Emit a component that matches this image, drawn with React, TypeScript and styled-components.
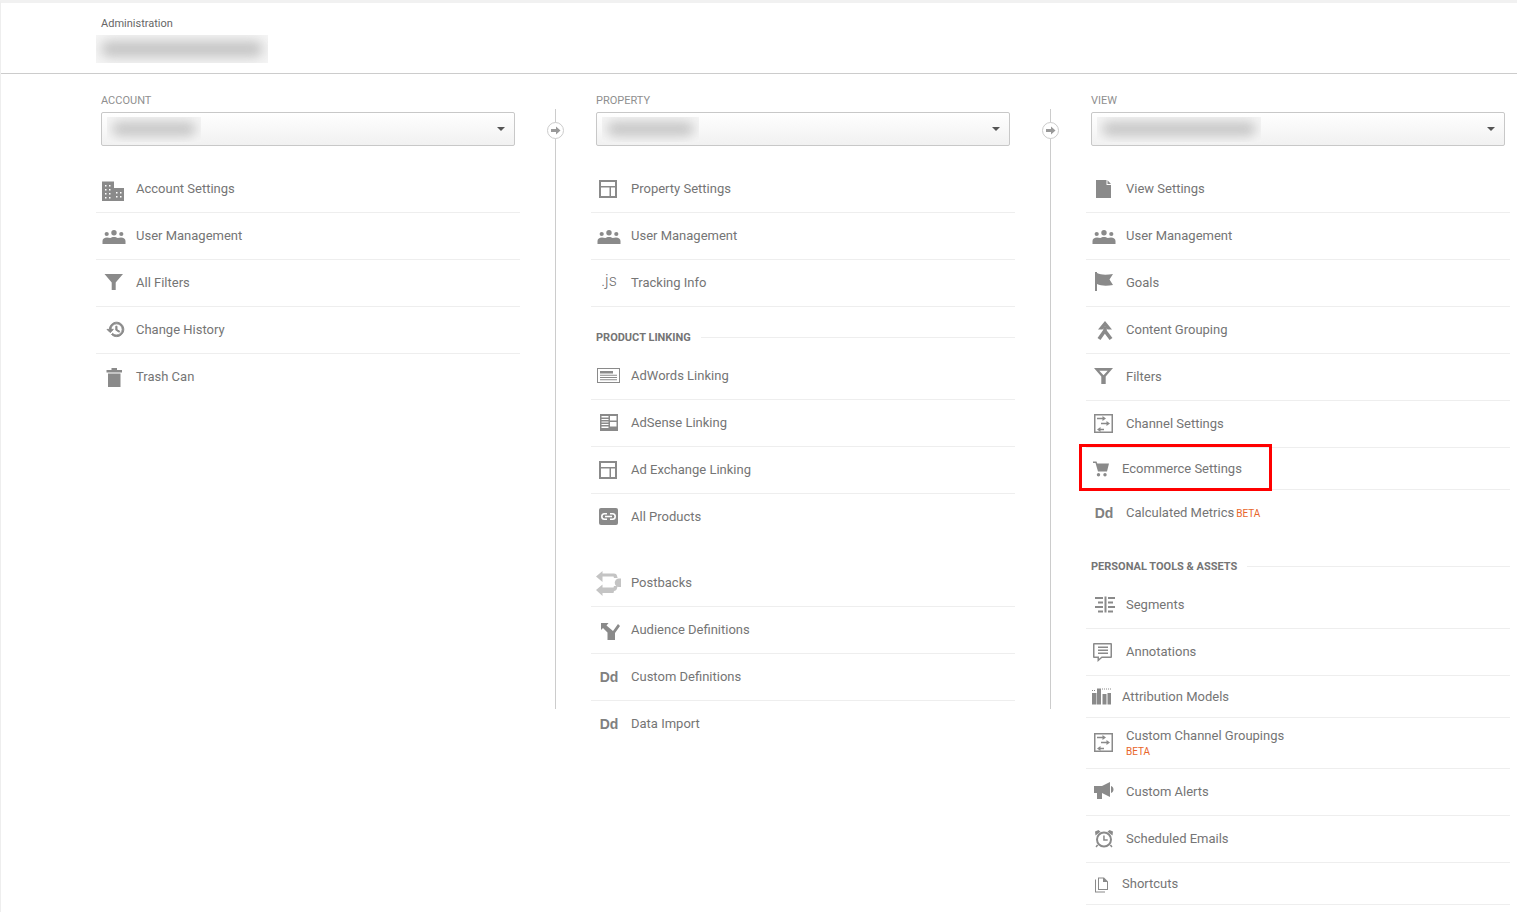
import React from "react";
import styled, { createGlobalStyle } from "styled-components";

const GlobalStyle = createGlobalStyle`
  html, body {
    margin: 0;
    padding: 0;
    background: #fff;
  }
  body {
    font-family: Roboto, "Liberation Sans", sans-serif;
    color: #757575;
    overflow: hidden;
  }
`;

const SPage = styled.div`
  min-height: 909px;
  border-top: 3px solid #f1f1f1;
  border-left: 1px solid #eeeeee;
`;

const SHeader = styled.header`
  height: 71px;
  box-sizing: border-box;
  padding: 14px 0 0 100px;
  border-bottom: 1px solid #cccccc;
`;

const SCrumb = styled.div`
  font-size: 11px;
  line-height: 14px;
  color: #666666;
`;

const SBlurPatch = styled.div<{ $w: number; $h: number }>`
  width: ${(p) => p.$w}px;
  height: ${(p) => p.$h}px;
  background: #f5f5f5;
  overflow: hidden;
  display: flex;
  align-items: center;
  padding: 0 5px;
  box-sizing: border-box;
`;

const SBlurBar = styled.div`
  flex: 1;
  height: 58%;
  background: #c4c4c4;
  border-radius: 8px;
  filter: blur(6px);
`;

const SHeaderBlur = styled.div`
  margin: 4px 0 0 -5px;
`;

const SColumns = styled.main`
  display: flex;
  padding: 19px 0 0 95px;
`;

const SColumn = styled.section`
  width: 424px;
  flex: none;
`;

const SRail = styled.div`
  width: 71px;
  flex: none;
  padding: 16px 0 0 35px;
  box-sizing: border-box;
`;

const SRailLine = styled.div`
  position: relative;
  width: 1px;
  height: 600px;
  background: #cccccc;
`;

const SRailDot = styled.div`
  position: absolute;
  top: 13px;
  left: -8px;
  width: 17px;
  height: 17px;
  box-sizing: border-box;
  border: 1px solid #cccccc;
  border-radius: 50%;
  background: #fff;
  display: flex;
  align-items: center;
  justify-content: center;
`;

const SColumnLabel = styled.div`
  padding-left: 5px;
  font-size: 11px;
  line-height: 16px;
  color: #8f8f8f;
  text-transform: uppercase;
`;

const SSelect = styled.div`
  width: 414px;
  height: 34px;
  box-sizing: border-box;
  margin: 3px 0 20px 5px;
  padding: 0 9px 0 5px;
  border: 1px solid #c8c8c8;
  border-radius: 2px;
  background: linear-gradient(#ffffff, #f1f1f1);
  display: flex;
  align-items: center;
  justify-content: space-between;
`;

const SCaret = styled.span`
  width: 0;
  height: 0;
  border-left: 4px solid transparent;
  border-right: 4px solid transparent;
  border-top: 4px solid #555555;
`;

const SRow = styled.div<{ $compact?: boolean; $tall?: boolean; $last?: boolean; $spaced?: boolean }>`
  position: relative;
  box-sizing: border-box;
  height: ${(p) => (p.$last ? "46px" : p.$tall ? "51px" : p.$compact ? "42px" : "47px")};
  margin-bottom: ${(p) => (p.$spaced ? "20px" : "0")};
  padding-left: ${(p) => (p.$compact ? "3px" : "6px")};
  border-bottom: ${(p) => (p.$last ? "none" : "1px solid #eeeeee")};
  display: flex;
  align-items: center;
  gap: ${(p) => (p.$compact ? "9px" : "10px")};
  font-size: 13px;
  color: #757575;
`;

const SLabel = styled.span<{ $lift?: boolean }>`
  margin-bottom: ${(p) => (p.$lift ? "2px" : "0")};
`;

const SHighlight = styled.div`
  position: absolute;
  top: -4px;
  left: -7px;
  width: 193px;
  height: 47px;
  box-sizing: border-box;
  border: 3px solid #ff0000;
`;

const SLabelStack = styled.div`
  display: flex;
  flex-direction: column;
  gap: 2px;
  line-height: 15px;
`;

const SBeta = styled.span<{ $inline?: boolean }>`
  font-size: 10px;
  line-height: 14px;
  color: #e8662a;
  margin-left: ${(p) => (p.$inline ? "2px" : "0")};
`;

const SSection = styled.div`
  height: 46px;
  box-sizing: border-box;
  padding: 23px 0 0 5px;
  display: flex;
  align-items: flex-start;
  gap: 10px;
  font-size: 11px;
  line-height: 16px;
  font-weight: 700;
  color: #757575;
  &::after {
    content: "";
    flex: 1;
    height: 1px;
    margin-top: 7px;
    background: #eeeeee;
  }
`;

const SGlyph = styled.svg<{ $light?: boolean }>`
  width: 24px;
  height: 24px;
  flex: none;
  fill: ${(p) => (p.$light ? "#c4c4c4" : "#8a8a8a")};
  overflow: visible;
`;

const STextIcon = styled.span<{ $bold?: boolean }>`
  width: 24px;
  flex: none;
  text-align: center;
  color: ${(p) => (p.$bold ? "#808080" : "#707070")};
  font-family: ${(p) => (p.$bold ? '"Liberation Sans", sans-serif' : "Roboto, sans-serif")};
  font-size: ${(p) => (p.$bold ? "14px" : "16px")};
  font-weight: ${(p) => (p.$bold ? 700 : 300)};
  line-height: 20px;
  margin-bottom: ${(p) => (p.$bold ? "0" : "4px")};
`;

const Glyph = ({ children, light }: { children: React.ReactNode; light?: boolean }) => (
  <SGlyph viewBox="0 0 24 24" $light={light}>
    {children}
  </SGlyph>
);

const BuildingIcon = () => (
  <Glyph>
    <path
      fillRule="evenodd"
      d="M0 4.500h12v6.500h10v13H0zM3 8v1.500h1.500V8zm4 0v1.500h1.500V8zM3 12v1.500h1.500V12zm4 0v1.500h1.500V12zM3 16v1.500h1.500V16zm4 0v1.500h1.500V16zM3 20v1.500h1.500V20zm4 0v1.500h1.500V20zm7-5v1.500h1.500V15zm4 0v1.500h1.500V15zm-4 4v1.500h1.500V19zm4 0v1.500h1.500V19z"
    />
  </Glyph>
);

const PeopleIcon = () => (
  <Glyph>
    <circle cx="4.700" cy="10" r="2.100" />
    <circle cx="12" cy="8.800" r="2.700" />
    <circle cx="19.300" cy="10" r="2.100" />
    <path d="M.5 20v-3c0-2 2-3.500 4.500-3.500 1.200 0 2.300.2 3.200.6 1-.7 2.400-1.100 3.800-1.100s2.800.4 3.800 1.100c.9-.4 2-.6 3.200-.6 2.500 0 4.500 1.500 4.500 3.500v3z" />
  </Glyph>
);

const FunnelIcon = () => (
  <Glyph>
    <path d="M2.500 3H21l-7.300 8.500V19h-4v-7.500z" />
  </Glyph>
);

const HollowFunnelIcon = () => (
  <Glyph>
    <path
      fillRule="evenodd"
      d="M2 3h19l-7.300 8.500V19h-4.400v-7.500zM7.300 5.700l4.200 4.600 4.200-4.600z"
    />
  </Glyph>
);

const HistoryIcon = () => (
  <Glyph>
    <g transform="translate(4.200 1.800) scale(.8)">
      <path
        stroke="#8a8a8a"
        strokeWidth="1.200"
        d="M13 3c-4.970 0-9 4.030-9 9H1l3.890 3.890.070.140L9 12H6c0-3.870 3.130-7 7-7s7 3.130 7 7-3.130 7-7 7c-1.930 0-3.680-.790-4.940-2.060l-1.420 1.420C8.270 19.990 10.510 21 13 21c4.970 0 9-4.030 9-9s-4.030-9-9-9zm-1 5v5l4.280 2.540.720-1.210-3.500-2.080V8H12z"
      />
    </g>
  </Glyph>
);

const TrashIcon = () => (
  <Glyph>
    <path d="M9.500 3h5.500v2h5v2.500H4.500V5h5zM6 8.500h12.500V22H6z" />
  </Glyph>
);

const LayoutIcon = () => (
  <Glyph>
    <path
      fillRule="evenodd"
      d="M2 3h18v18H2zm2 2v4h14V5zm0 5.500V19h8.500v-8.500zm10 0V19h4v-8.500z"
    />
  </Glyph>
);

const AdWordsIcon = () => (
  <Glyph>
    <path fillRule="evenodd" d="M0 4h23v15H0zm1 1v13h21V5z" />
    <path d="M3 7h13v2.500H3zM3 10.800h17v1H3zM3 13h17v1H3zM3 15.200h17v1H3z" />
  </Glyph>
);

const AdSenseIcon = () => (
  <Glyph>
    <path
      fillRule="evenodd"
      d="M3 3h18v17H3zm1.500 2v1.500h7V5zm0 3v1h7V8zm0 2.500v1h7v-1zm0 2.500v1h7v-1zm0 2.500v1.500h7v-1.500zM13 5v4.500h6.500V5zm0 6v4.500h6.500V11z"
    />
  </Glyph>
);

const LinkBadgeIcon = () => (
  <Glyph>
    <rect x="2" y="3" width="19" height="17" rx="2" />
    <path
      d="M10 8.800H7.500a2.700 2.700 0 0 0 0 5.400H10M13 8.800h2.500a2.700 2.700 0 0 1 0 5.400H13M8 11.500h7"
      fill="none"
      stroke="#fff"
      strokeWidth="1.600"
    />
  </Glyph>
);

const PostbacksIcon = () => (
  <Glyph light>
    <path d="M-1 5.500L5.500 0v2.500H17c1.500 0 2.600.9 3 2.200l.6 2.300H17l-.5-1.500H5.500V11z" />
    <path d="M24 7.500V16h-2a4.250 4.250 0 0 1 0-8.500z" />
    <path d="M-1 19l6.500-5.500v3h11l.5-1.500h3.600L20 17.500c-.4 1.600-1.500 2.500-3 2.500l-.5 2H5.500v3z" />
  </Glyph>
);

const ForkIcon = () => (
  <Glyph>
    <path d="M4 5h7.500L9.500 7.500 16 13l5-7 2 2-5 7v7h-7.500v-7.500L6 10l-2 2z" />
  </Glyph>
);

const FileIcon = () => (
  <Glyph>
    <path d="M4 3h10.500v5H19v13H4zM15.500 3.300L19 7h-3.500z" />
  </Glyph>
);

const FlagIcon = () => (
  <Glyph>
    <path d="M3 1h2v19H3zM5 2c4 2 9 2 16 1l-3.500 5.500L21 14c-6 1-12 1-16-1z" />
  </Glyph>
);

const MergeIcon = () => (
  <Glyph>
    <path d="M13 3l7 8.500h-4.500L13 8.500l-2.500 3H6z" />
    <path
      d="M13 9v3.500L7 21M13 13l6 8"
      fill="none"
      stroke="#8a8a8a"
      strokeWidth="3.600"
    />
  </Glyph>
);

const ChannelIcon = () => (
  <Glyph>
    <path fillRule="evenodd" d="M2 2h19v19H2zm1.500 1.500v16h16v-16z" />
    <path d="M5 5.700h5.500V4l3.500 2.500L10.500 9V7.300H5zM9 10.700h5.500V9l3.500 2.500-3.500 2.500v-1.700H9zM12 16.700H8.500V15L5 17.500 8.500 20v-1.700H12z" />
  </Glyph>
);

const CartIcon = () => (
  <Glyph>
    <path d="M4 4.500h3.500l.8 2H20l-2 8H9L6.500 6H4z" />
    <circle cx="9.500" cy="17.800" r="1.700" />
    <circle cx="16" cy="17.800" r="1.700" />
  </Glyph>
);

const SegmentsIcon = () => (
  <Glyph>
    <path d="M12.500 3.500h2v16h-2zM3 4h8v2H3zM6 8.500h5v2H6zM3 13h8v2H3zM6 17.500h5v2H6zM16 4h7v2h-7zM16 8.500h5v2h-5zM16 13h7v2h-7zM16 17.500h5v2h-5z" />
  </Glyph>
);

const BubbleIcon = () => (
  <Glyph>
    <path
      fillRule="evenodd"
      d="M2 3h17a1 1 0 0 1 1 1v13a1 1 0 0 1-1 1H10l-4.500 4v-4H2a1 1 0 0 1-1-1V4a1 1 0 0 1 1-1zm.500 1.500v12h4.500v2.300l2.600-2.300h8.900v-12z"
    />
    <path d="M6 6.500h10v1.400H6zM6 9.500h10v1.400H6zM6 12.500h10v1.400H6z" />
  </Glyph>
);

const BarsIcon = () => (
  <Glyph>
    <path d="M3 8h4.500v11.500H3zM8 3.500h4v16H8zM13.500 9h4v10.500h-4zM18.500 8h3.500v11.500h-3.500z" />
    <path
      d="M3 5.500h4M13 4h9"
      fill="none"
      stroke="#8a8a8a"
      strokeWidth="1"
      strokeDasharray="1 1"
    />
  </Glyph>
);

const MegaphoneIcon = () => (
  <Glyph>
    <path d="M2 6h8l8-4v15l-8-4v6H5v-6H2zM19 6c1.500.5 2.500 1.800 2.500 3.500s-1 3-2.500 3.500z" />
  </Glyph>
);

const AlarmIcon = () => (
  <Glyph>
    <path
      fillRule="evenodd"
      d="M12 4.500a8 8 0 1 1 0 16 8 8 0 0 1 0-16zm0 2a6 6 0 1 0 0 12 6 6 0 0 0 0-12z"
    />
    <path d="M11.200 8.500h1.500v3.700h3v1.500h-4.500zM3.500 8.500L3 4.500 6.500 3l2 1.800zM20.500 8.500l.5-4L17.500 3l-2 1.800zM5 17.500l1.300 1L4.500 20.500l-1-1zM19 17.500l-1.300 1 1.800 2 1-1z" />
  </Glyph>
);

const CopyIcon = () => (
  <Glyph>
    <path fillRule="evenodd" d="M9 5.500h6l4 4V18H9zm1 1V17h8V10h-4V6.500z" />
    <path d="M6 7.500h1V19.500h9v1H6z" />
  </Glyph>
);

const ArrowIcon = () => (
  <svg width="10" height="9" viewBox="0 0 10 9" fill="#999999">
    <path d="M0 3h5V.5L9.500 4.500 5 8.500V6H0z" />
  </svg>
);

type RowProps = {
  icon: React.ReactNode;
  label: string;
  compact?: boolean;
  last?: boolean;
  spaced?: boolean;
  beta?: "inline" | "below";
  highlighted?: boolean;
};

const Row = ({ icon, label, compact, last, spaced, beta, highlighted }: RowProps) => (
  <SRow $compact={compact} $last={last} $spaced={spaced} $tall={beta === "below"}>
    {icon}
    {beta === "below" ? (
      <SLabelStack>
        <span>{label}</span>
        <SBeta>BETA</SBeta>
      </SLabelStack>
    ) : (
      <SLabel $lift={!compact && !beta}>
        {label}
        {beta === "inline" && <SBeta $inline>BETA</SBeta>}
      </SLabel>
    )}
    {highlighted && <SHighlight />}
  </SRow>
);

const ColumnHead = ({ label, blur }: { label: string; blur: number }) => (
  <>
    <SColumnLabel>{label}</SColumnLabel>
    <SSelect>
      <SBlurPatch $w={blur} $h={25}>
        <SBlurBar />
      </SBlurPatch>
      <SCaret />
    </SSelect>
  </>
);

const Rail = () => (
  <SRail>
    <SRailLine>
      <SRailDot>
        <ArrowIcon />
      </SRailDot>
    </SRailLine>
  </SRail>
);

export default function App() {
  return (
    <SPage>
      <GlobalStyle />
      <SHeader>
        <SCrumb>Administration</SCrumb>
        <SHeaderBlur>
          <SBlurPatch $w={172} $h={28}>
            <SBlurBar />
          </SBlurPatch>
        </SHeaderBlur>
      </SHeader>
      <SColumns>
        <SColumn>
          <ColumnHead label="Account" blur={94} />
          <Row icon={<BuildingIcon />} label="Account Settings" />
          <Row icon={<PeopleIcon />} label="User Management" />
          <Row icon={<FunnelIcon />} label="All Filters" />
          <Row icon={<HistoryIcon />} label="Change History" />
          <Row icon={<TrashIcon />} label="Trash Can" last />
        </SColumn>
        <Rail />
        <SColumn>
          <ColumnHead label="Property" blur={97} />
          <Row icon={<LayoutIcon />} label="Property Settings" />
          <Row icon={<PeopleIcon />} label="User Management" />
          <Row icon={<STextIcon>.js</STextIcon>} label="Tracking Info" />
          <SSection>PRODUCT LINKING</SSection>
          <Row icon={<AdWordsIcon />} label="AdWords Linking" />
          <Row icon={<AdSenseIcon />} label="AdSense Linking" />
          <Row icon={<LayoutIcon />} label="Ad Exchange Linking" />
          <Row icon={<LinkBadgeIcon />} label="All Products" last spaced />
          <Row icon={<PostbacksIcon />} label="Postbacks" />
          <Row icon={<ForkIcon />} label="Audience Definitions" />
          <Row icon={<STextIcon $bold>Dd</STextIcon>} label="Custom Definitions" />
          <Row icon={<STextIcon $bold>Dd</STextIcon>} label="Data Import" last />
        </SColumn>
        <Rail />
        <SColumn>
          <ColumnHead label="View" blur={164} />
          <Row icon={<FileIcon />} label="View Settings" />
          <Row icon={<PeopleIcon />} label="User Management" />
          <Row icon={<FlagIcon />} label="Goals" />
          <Row icon={<MergeIcon />} label="Content Grouping" />
          <Row icon={<HollowFunnelIcon />} label="Filters" />
          <Row icon={<ChannelIcon />} label="Channel Settings" />
          <Row icon={<CartIcon />} label="Ecommerce Settings" compact highlighted />
          <Row icon={<STextIcon $bold>Dd</STextIcon>} label="Calculated Metrics" beta="inline" last />
          <SSection>PERSONAL TOOLS &amp; ASSETS</SSection>
          <Row icon={<SegmentsIcon />} label="Segments" />
          <Row icon={<BubbleIcon />} label="Annotations" />
          <Row icon={<BarsIcon />} label="Attribution Models" compact />
          <Row icon={<ChannelIcon />} label="Custom Channel Groupings" beta="below" />
          <Row icon={<MegaphoneIcon />} label="Custom Alerts" />
          <Row icon={<AlarmIcon />} label="Scheduled Emails" />
          <Row icon={<CopyIcon />} label="Shortcuts" compact />
        </SColumn>
      </SColumns>
    </SPage>
  );
}
